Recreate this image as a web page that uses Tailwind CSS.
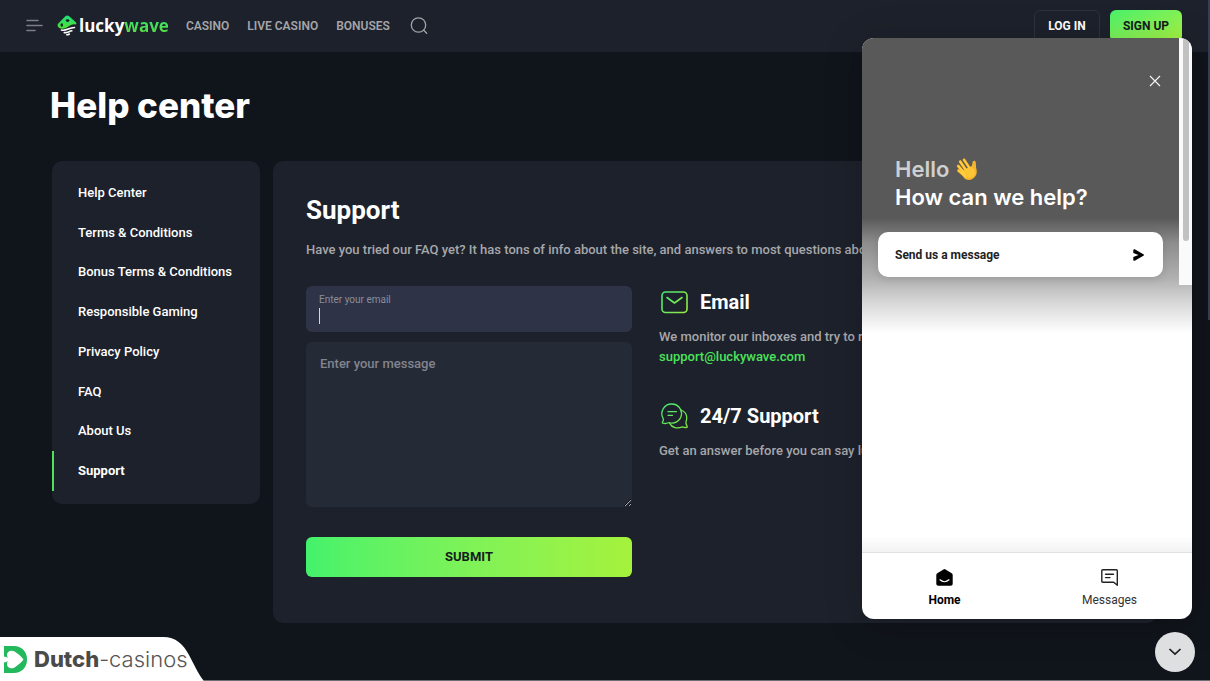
<!DOCTYPE html>
<html lang="en">
<head>
    <meta charset="UTF-8">
    <meta name="viewport" content="width=device-width, initial-scale=1.0">
    <title>Help center - LuckyWave</title>
    <script src="https://cdn.jsdelivr.net/npm/@tailwindcss/browser@4"></script>
</head>
<body class="relative min-h-screen overflow-hidden bg-[#10141b] font-['Roboto',sans-serif] text-[13px] leading-5 text-white">

    <!-- Top bar -->
    <header class="flex h-13 items-center bg-[#1d212b] pb-px pl-[26px] pr-7">
        <button type="button" aria-label="Menu" class="mr-[14px]">
            <svg class="block" width="17" height="14" viewBox="0 0 17 14" fill="none" stroke="#7d7e88" stroke-width="1.6" stroke-linecap="round"><path d="M1 1.500h11M1 6.500h15M1 11.500h8"/></svg>
        </button>
        <a href="#" class="flex items-center gap-[2px]" aria-label="luckywave">
            <svg width="20" height="21" viewBox="0 0 20 21">
                <defs><linearGradient id="logo" x1="0" y1="0" x2="0" y2="1"><stop offset="0" stop-color="#1ee07a"/><stop offset="1" stop-color="#4fe032"/></linearGradient></defs>
                <path fill="url(#logo)" d="M8.400 1.200a3 3 0 0 1 3.800 0l6.600 6c.9.9.8 2 0 2.200-3.400-.6-5.400.6-7.400 2.200-2.400 1.800-5.400 3-9.200 1.400L1.300 12c-.9-1-.9-2.600 0-3.500z"/>
                <ellipse cx="10.600" cy="5.600" rx="1.800" ry="1.300" fill="#1d212b"/>
                <ellipse cx="4.800" cy="10" rx="1.300" ry="1.700" fill="#1d212b"/>
                <path fill="none" stroke="#fff" stroke-width="1.600" stroke-linecap="round" d="M4.500 15c5 1.200 7-2.400 13-2.500M7.300 17.600c3 .5 4.800-1.300 7.500-1.800M9.800 19.700c1 .2 1.800-.2 2.500-.7"/>
            </svg>
            <span class="font-['Open_Sans',sans-serif] text-[17px] leading-6 font-bold">lucky<span class="bg-linear-to-b from-[#1ee07a] to-[#5fdc2c] bg-clip-text text-transparent">wave</span></span>
        </a>
        <nav class="ml-[17px] flex items-center gap-[18px] text-[12px] font-semibold text-[#a4a5a9]">
            <a href="#">CASINO</a>
            <a href="#">LIVE CASINO</a>
            <a href="#">BONUSES</a>
        </nav>
        <button type="button" aria-label="Search" class="ml-5">
            <svg class="block" width="18" height="18" viewBox="0 0 18 18" fill="none" stroke="#a4a5a9" stroke-width="1.300" stroke-linecap="round"><circle cx="8.500" cy="8" r="7.200"/><path d="M13.700 13.200l3 3"/></svg>
        </button>
        <div class="ml-auto flex gap-[10px] text-[12px] font-bold">
            <button type="button" class="h-8 w-[66px] rounded-md border border-[#2f323d]">LOG IN</button>
            <button type="button" class="h-8 w-[72px] rounded-md bg-linear-to-br from-[#43f26b] to-[#a5f23c] text-[#13201c]">SIGN UP</button>
        </div>
    </header>

    <main class="pl-[52px] pr-[53px] pt-8">
        <h1 class="-ml-0.5 font-['Inter',sans-serif] text-[35px] leading-[42px] font-extrabold">Help center</h1>

        <div class="mt-[35px] flex items-start gap-[13px]">
            <nav class="w-52 shrink-0 rounded-[10px] bg-[#1d212b] pt-3 pb-[13px] font-medium" aria-label="Help topics">
                <ul class="flex min-h-[318px] flex-col *:flex *:flex-1 *:items-center *:border-l-2 *:border-transparent *:pl-6">
                    <li><a href="#">Help Center</a></li>
                    <li><a href="#">Terms &amp; Conditions</a></li>
                    <li><a href="#">Bonus Terms &amp; Conditions</a></li>
                    <li><a href="#">Responsible Gaming</a></li>
                    <li><a href="#">Privacy Policy</a></li>
                    <li><a href="#">FAQ</a></li>
                    <li><a href="#">About Us</a></li>
                    <li class="border-[#4be35a]!"><a href="#" class="font-bold" aria-current="page">Support</a></li>
                </ul>
            </nav>

            <section class="min-w-0 flex-1 overflow-hidden rounded-[10px] bg-[#1d212b] px-[33px] pt-[31px] pb-[46px]">
                <h2 class="text-[26px] leading-9 font-bold">Support</h2>
                <p class="mt-3 whitespace-nowrap font-medium text-[#a6a7ab]">Have you tried our FAQ yet? It has tons of info about the site, and answers to most questions about</p>

                <div class="mt-[26px] grid grid-cols-[326px_1fr] gap-[27px]">
                    <form>
                        <div class="relative h-[46px] rounded-md bg-[#2f3347]">
                            <label for="email" class="absolute left-[13px] top-[6px] text-[10px] leading-4 text-[#8b8d9a]">Enter your email</label>
                            <input id="email" type="email" class="size-full rounded-md px-[13px] pt-4 outline-none">
                            <span class="absolute left-[13px] top-[22px] h-4 w-px bg-[#d5d6dc]"></span>
                        </div>
                        <textarea aria-label="Message" placeholder="Enter your message" class="mt-[10px] block h-[165px] w-full resize-y rounded-md bg-[#252a37] px-[14px] py-3 font-medium placeholder:text-[#82848d]"></textarea>
                        <button type="submit" class="mt-[30px] h-10 w-full rounded-md bg-linear-to-r from-[#43f26b] to-[#a5f23c] text-[13px] font-bold text-[#13201c]">SUBMIT</button>
                    </form>

                    <div class="min-w-0 whitespace-nowrap font-medium text-[#a6a7ab]">
                        <h3 class="flex items-center gap-3 pl-[2px] text-[20px] leading-8 font-bold text-white">
                            <svg width="27" height="28" viewBox="0 0 27 28" fill="none" stroke="url(#mail)" stroke-width="1.600" stroke-linecap="round" stroke-linejoin="round">
                                <defs><linearGradient id="mail" gradientUnits="userSpaceOnUse" x1="0" y1="4" x2="26" y2="24"><stop offset="0" stop-color="#43e878"/><stop offset="1" stop-color="#98ec3c"/></linearGradient></defs>
                                <rect x="1" y="4" width="25" height="20.500" rx="3.500"/>
                                <path d="M6 9.500l7.500 5.500L21 9.500"/>
                            </svg>
                            Email
                        </h3>
                        <p class="mt-[9px]">We monitor our inboxes and try to reply within the hour.<br><a href="#" class="text-[#4be35a]">support@luckywave.com</a></p>
                        <h3 class="mt-[33px] flex items-center gap-3 pl-[2px] text-[20px] leading-8 font-bold text-white">
                            <svg width="27" height="28" viewBox="0 0 27 28" fill="none" stroke="url(#chat)" stroke-width="1.300" stroke-linecap="round" stroke-linejoin="round">
                                <defs><linearGradient id="chat" gradientUnits="userSpaceOnUse" x1="0" y1="2" x2="26" y2="26"><stop offset="0" stop-color="#43e878"/><stop offset="1" stop-color="#80e33c"/></linearGradient></defs>
                                <path d="M10.800 2A9.500 9.500 0 1 1 8 20.500c-2 1-4.200 1.200-6 .7-.8-.3-.8-.9-.3-1.500.8-1.100.8-2.200.4-3.300A9.700 9.700 0 0 1 10.800 2z"/>
                                <path d="M20 8c4 1.500 6.200 5.200 5.600 9.300-.2 1.600-.9 2.900-.6 4.200.2.900.7 1.900 1.100 2.700.4.800 0 1.300-.8 1.300-1.600.1-2.700-.1-4-.6-4.700 2.200-10.500.9-12.600-3.500"/>
                                <path d="M7 9.700h8.500M7 13.300h4.500"/>
                            </svg>
                            24/7 Support
                        </h3>
                        <p class="mt-[9px]">Get an answer before you can say luckywave.</p>
                    </div>
                </div>
            </section>
        </div>
    </main>

    <!-- Page scrollbar -->
    <div class="absolute right-0 top-0 h-80 w-[2px] bg-[#3a3e55]"></div>

    <!-- Chat messenger -->
    <aside aria-label="Chat" class="absolute right-[18px] top-[38px] flex h-[581px] w-[330px] flex-col overflow-hidden rounded-xl bg-white font-['Inter',sans-serif] text-black shadow-[0_5px_40px_rgba(0,0,0,0.16)]">
        <div class="relative flex-1 bg-[linear-gradient(180deg,#595959_0,#595959_180px,#8d8d8d_205px,#b0b0b0_240px,#d8d8d8_265px,#ffffff_295px)] pl-4 pr-[29px] pt-[31px]">
            <button type="button" aria-label="Close" class="-mr-1 ml-auto block size-6 p-[6px]">
                <svg width="12" height="12" viewBox="0 0 12 12" stroke="#f2f2f2" stroke-width="1.200"><path d="M1 1l10 10M11 1L1 11"/></svg>
            </button>
            <p class="mt-[62px] flex items-center gap-[7px] pl-[17px] text-[22px] leading-7 font-semibold text-[#cfcfcf]">Hello
                <svg width="22" height="24" viewBox="0 0 22 24" fill="none" stroke-linecap="round" role="img" aria-label="Waving hand">
                    <g stroke="#e59a20" stroke-width="2.800"><path d="M8 2.800l6.500 9.700M4.200 4.600l6.800 10M2.200 9l7.300 8.500M2.500 13.600l7 6"/></g>
                    <path fill="#f6b62c" d="M4.500 14L15 9.500c1.500-.5 1.200-3.500 1.800-5 .6-1.200 2.500-1 2.900.5.500 3-.1 4 .8 7.500 1 4.500-1 7.300-3.800 9.200-3 2-6.500 1.600-8.700-.7z"/>
                    <g stroke="#ffce3e" stroke-width="2"><path d="M8 2.800l6.500 9.700M4.200 4.600l6.800 10M2.200 9l7.300 8.500M2.500 13.600l7 6"/></g>
                    <path fill="#fdc536" d="M8 13l7.500-3c1.500 1.500 3.500 3 3.500 6-.2 3-4.500 6-8 4.500z"/>
                </svg>
            </p>
            <h2 class="pl-[17px] text-[22px] leading-7 font-semibold text-white">How can we help?</h2>
            <button type="button" class="mt-[21px] flex h-[45px] w-full items-center justify-between rounded-[10px] bg-white pl-[17px] pr-[19px] font-['Roboto',sans-serif] text-[12px] font-bold text-[#222] shadow-[0_2px_8px_rgba(0,0,0,0.12)]">
                Send us a message
                <svg width="11" height="12" viewBox="0 0 11 12"><path d="M.3 1.200C.3.400 1 0 1.700.300l8.700 4.900c.7.400.7 1.200 0 1.600l-8.700 4.900c-.7.300-1.400-.1-1.400-.9V8L5.500 6 .3 4z"/></svg>
            </button>
            <div class="absolute right-0 top-0 h-[247px] w-[13px] bg-[#fafafa] pl-1">
                <div class="h-[203px] w-[6px] rounded-full bg-[#c1c1c1]"></div>
            </div>
            <div class="absolute inset-x-0 bottom-0 h-4 bg-linear-to-b from-transparent to-black/5"></div>
        </div>
        <nav class="grid h-[67px] grid-cols-2 border-t border-[#e2e2e2] font-['Roboto',sans-serif] text-[12px] leading-4 *:flex *:flex-col *:items-center *:gap-[6px] *:pt-4">
            <button type="button" class="font-bold">
                <svg width="18" height="17" viewBox="0 0 18 17"><path d="M7.500.4a2 2 0 0 1 2 0l6.200 3.800c.6.400 1 1 1 1.700v8.800c0 1.200-.9 2-2 2H2.300c-1.100 0-2-.8-2-2V5.900c0-.7.400-1.300 1-1.700z"/><path d="M4 10.800c2.600 2.300 6.400 2.300 9 0" fill="none" stroke="#fff" stroke-width="1.200" stroke-linecap="round"/></svg>
                Home
            </button>
            <button type="button" class="text-[#333]">
                <svg width="18" height="17" viewBox="0 0 18 17" fill="none" stroke="#222" stroke-width="1.400" stroke-linejoin="round" stroke-linecap="round"><path d="M1.800.8h13.500c.6 0 1 .4 1 1v14.400l-3.600-3.000H1.800c-.6 0-1-.4-1-1V1.800c0-.6.4-1 1-1z"/><path d="M4.500 5.300h8M4.500 8.600h4.500"/></svg>
                Messages
            </button>
        </nav>
    </aside>
    <button type="button" aria-label="Close chat" class="absolute bottom-[9px] right-[15px] flex size-10 items-center justify-center rounded-full bg-[#dedfe1]">
        <svg width="14" height="8" viewBox="0 0 14 8" fill="none" stroke="#1c1c1c" stroke-width="1.700"><path d="M1.500 1l5.500 5.200L12.500 1"/></svg>
    </button>

    <!-- Site badge -->
    <div class="absolute bottom-0 left-0 h-[45px] w-[204px]">
        <svg class="absolute inset-0" width="204" height="45" viewBox="0 0 204 45"><path fill="#fff" d="M0 1h163c13 0 20 7 26 18 5 9 9 19 15 26H0z"/></svg>
        <a href="#" class="relative flex h-full items-center gap-[7px] pl-1 pt-px font-['Inter',sans-serif] text-[22px] text-[#555]">
            <svg width="23" height="27" viewBox="0 0 23 27"><path fill="#22b85c" d="M0 0h10c7.500 0 13 5.500 13 13.500S17.500 27 10 27H0z"/><path fill="#fff" d="M19.500 13.500c-2.500 3.500-6 6-9.300 8.200C6.500 23.500 2.500 21 3 17.500c.1-1 .5-1.700 1-2.300-1.200.6-2.600.8-4 1.300v-6c1.400.5 2.800.7 4 1.300-.5-.6-.9-1.300-1-2.300C2.500 6 6.500 3.500 10.200 5.300c3.300 2.200 6.800 4.700 9.300 8.200z"/></svg>
            <span><b class="font-extrabold text-[#4a4a4a]">Dutch</b><span class="font-light">-casinos</span></span>
        </a>
    </div>
    <div class="absolute bottom-0 left-[204px] right-0 h-px bg-[#6b6e75]"></div>
</body>
</html>
